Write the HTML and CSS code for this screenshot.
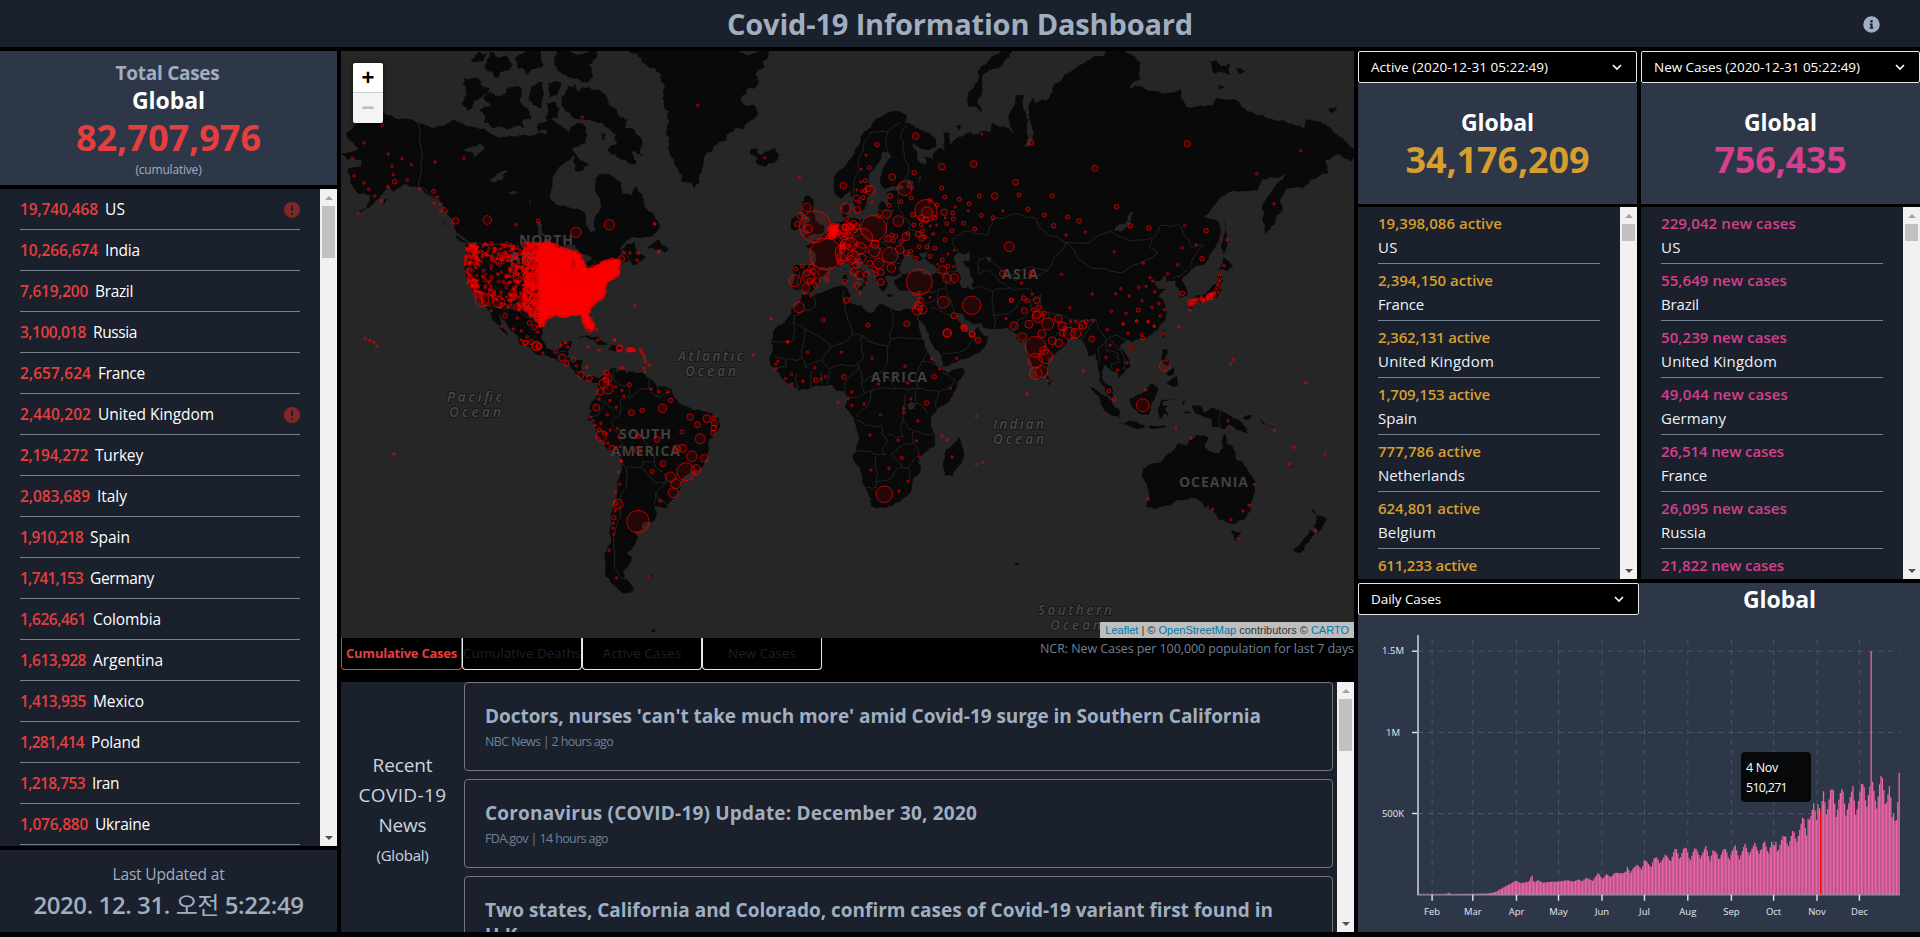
FILE: index.html
```
<!DOCTYPE html>
<html lang="en">
<head>
<meta charset="utf-8">
<title>Covid-19 Information Dashboard</title>
<link rel="stylesheet" href="styles.css">
</head>
<body>
<header class="topbar">
  <h1 class="topbar-title"><span data-w="466">Covid-19 Information Dashboard</span></h1>
  <svg class="info-icon" viewBox="0 0 512 512"><path fill="currentColor" fill-rule="evenodd" d="M256 8a248 248 0 1 0 0 496a248 248 0 1 0 0-496zM256 118a42 42 0 1 1 0 84a42 42 0 1 1 0-84zM312 372a12 12 0 0 1-12 12h-88a12 12 0 0 1-12-12v-24a12 12 0 0 1 12-12h12v-64h-12a12 12 0 0 1-12-12v-24a12 12 0 0 1 12-12h64a12 12 0 0 1 12 12v100h12a12 12 0 0 1 12 12z"/></svg>
</header>
<main class="board">
  <section class="col-left">
    <div class="total">
      <div class="total-label"><span data-w="104">Total Cases</span></div>
      <div class="total-place"><span data-w="73">Global</span></div>
      <div class="total-num"><span data-w="185">82,707,976</span></div>
      <div class="total-note"><span data-w="66">(cumulative)</span></div>
    </div>
    <div class="scroller grow">
      <ul class="case-list" id="cases"></ul>
      <div class="sbar"><i class="up"></i><b class="thumb thumb-52"></b><i class="down"></i></div>
    </div>
    <div class="updated">
      <div class="updated-label"><span data-w="112">Last Updated at</span></div>
      <div class="updated-time"><span data-w="270">2020. 12. 31. <span class="meridiem">오전</span> 5:22:49</span></div>
    </div>
  </section>

  <section class="col-mid">
    <div class="map">
      <svg class="map-svg" viewBox="0 0 1013 587">
        <g id="land" class="land"></g>
        <g id="water" class="water"></g>
        <g id="borders" class="borders"></g>
        <g class="continent">
          <text x="178" y="194" textLength="54">NORTH</text><text x="169" y="211" textLength="68">AMERICA</text>
          <text x="278" y="388" textLength="52">SOUTH</text><text x="270" y="405" textLength="69">AMERICA</text>
          <text x="530" y="331" textLength="56">AFRICA</text><text x="661" y="228" textLength="36">ASIA</text>
          <text x="838" y="436" textLength="69">OCEANIA</text>
        </g>
        <g class="ocean">
          <text x="106" y="351" textLength="55">Pacific</text><text x="108" y="366" textLength="52">Ocean</text>
          <text x="337" y="310" textLength="65">Atlantic</text><text x="344" y="325" textLength="51">Ocean</text>
          <text x="652" y="378" textLength="51">Indian</text><text x="652" y="393" textLength="51">Ocean</text>
          <text x="697" y="564" textLength="74">Southern</text><text x="709" y="579" textLength="51">Ocean</text>
        </g>
        <g id="marks" class="marks"></g>
      </svg>
      <div class="zoom-ctl"><span class="zoom-in">+</span><span class="zoom-out">−</span></div>
      <div class="attrib"><a>Leaflet</a> | © <a>OpenStreetMap</a> contributors © <a>CARTO</a></div>
    </div>
    <div class="tabs">
      <div class="tab tab-on"><span data-w="111">Cumulative Cases</span></div>
      <div class="tab"><span data-w="118">Cumulative Deaths</span></div>
      <div class="tab"><span data-w="79">Active Cases</span></div>
      <div class="tab"><span data-w="68">New Cases</span></div>
      <div class="ncr"><span data-w="314">NCR: New Cases per 100,000 population for last 7 days</span></div>
    </div>
    <div class="news">
      <div class="news-side"><span data-w="60">Recent</span><span data-w="88">COVID-19</span><span data-w="48">News</span><small class="news-scope"><span data-w="52">(Global)</span></small></div>
      <div class="news-list">
        <article class="card"><h2 class="card-title"><span data-w="776">Doctors, nurses 'can't take much more' amid Covid-19 surge in Southern California</span></h2><p class="card-src"><span data-w="128">NBC News | 2 hours ago</span></p></article>
        <article class="card"><h2 class="card-title"><span data-w="492">Coronavirus (COVID-19) Update: December 30, 2020</span></h2><p class="card-src"><span data-w="123">FDA.gov | 14 hours ago</span></p></article>
        <article class="card"><h2 class="card-title"><span data-w="788">Two states, California and Colorado, confirm cases of Covid-19 variant first found in</span><br>U.K.</h2></article>
      </div>
      <div class="sbar"><i class="up"></i><b class="thumb thumb-52"></b><i class="down"></i></div>
    </div>
  </section>

  <section class="col-right">
    <div class="pair">
      <div class="stat">
        <div class="select"><span data-w="177">Active (2020-12-31 05:22:49)</span><svg class="chev" viewBox="0 0 10 7"><path d="M1 1l4 4 4-4"/></svg></div>
        <div class="stat-head"><div class="stat-place"><span data-w="73">Global</span></div><div class="stat-num amber"><span data-w="184">34,176,209</span></div></div>
        <div class="scroller grow">
          <ul class="stat-list amber" id="active"></ul>
          <div class="sbar"><i class="up"></i><b class="thumb thumb-17"></b><i class="down"></i></div>
        </div>
      </div>
      <div class="stat">
        <div class="select"><span data-w="206">New Cases (2020-12-31 05:22:49)</span><svg class="chev" viewBox="0 0 10 7"><path d="M1 1l4 4 4-4"/></svg></div>
        <div class="stat-head"><div class="stat-place"><span data-w="73">Global</span></div><div class="stat-num pink"><span data-w="132">756,435</span></div></div>
        <div class="scroller grow">
          <ul class="stat-list pink" id="fresh"></ul>
          <div class="sbar"><i class="up"></i><b class="thumb thumb-17"></b><i class="down"></i></div>
        </div>
      </div>
    </div>
    <div class="daily">
      <div class="daily-head">
        <div class="select select-daily"><span data-w="70">Daily Cases</span><svg class="chev" viewBox="0 0 10 7"><path d="M1 1l4 4 4-4"/></svg></div>
        <div class="daily-place"><span data-w="73">Global</span></div>
      </div>
      <svg class="chart" id="chart" viewBox="0 0 562 317"></svg>
      <div class="tip"><div><span data-w="32">4 Nov</span></div><div><span data-w="41">510,271</span></div></div>
    </div>
  </section>
</main>
<script src="app.js"></script>
</body>
</html>
```
FILE: styles.css
```
* { box-sizing: border-box; margin: 0; padding: 0; }
body { background: #000; color: #fff; font-family: "Open Sans", "Noto Sans", "Noto Sans CJK KR", sans-serif; font-size: 16px; line-height: 1.5; height: 937px; overflow: hidden; display: flex; flex-direction: column; }
ul { list-style: none; }
.topbar { height: 47px; flex: none; background: #1a202c; display: flex; align-items: center; justify-content: center; position: relative; }
.topbar-title { font-size: 29px; font-weight: 700; color: #a0aec0; line-height: 42px; white-space: nowrap; }
.info-icon { position: absolute; right: 40px; top: 16px; width: 17px; height: 17px; color: #a0aec0; }
.board { display: grid; grid-template-columns: 337px 1013px 562px; column-gap: 4px; margin-top: 4px; height: 881px; }
.grow { flex: 1; min-height: 0; }

.col-left { display: flex; flex-direction: column; gap: 4px; height: 881px; min-height: 0; }
.total { height: 134px; flex: none; background: #2d3748; text-align: center; padding-top: 8px; }
.total-label { font-size: 19px; font-weight: 700; color: #a0aec0; line-height: 28px; margin-left: -2px; }
.total-place { font-size: 23px; font-weight: 700; line-height: 27px; }
.total-num { font-size: 36px; font-weight: 700; color: #e53e3e; line-height: 47px; }
.total-note { font-size: 12px; color: #a0aec0; line-height: 17px; }
.scroller { display: flex; background: #1a202c; overflow: hidden; }
.sbar { flex: none; width: 17px; background: #f1f1f1; display: flex; flex-direction: column; align-items: center; }
.sbar .up, .sbar .down { height: 17px; display: flex; align-items: center; }
.sbar .up::after { content: ""; border: 4px solid transparent; border-top: 0; border-bottom: 4px solid #a3a3a3; }
.sbar .down { margin-top: auto; }
.sbar .down::after { content: ""; border: 4px solid transparent; border-bottom: 0; border-top: 4px solid #505050; }
.thumb { width: 13px; background: #c1c1c1; }
.thumb-52 { height: 52px; }
.thumb-17 { height: 17px; }
.case-list { flex: 1; padding: 0 20px; }
.case-row { height: 41px; border-bottom: 1px solid #718096; display: flex; align-items: center; font-size: 15.5px; white-space: nowrap; padding-top: 1px; }
.case-num { color: #e53e3e; font-weight: 600; margin-right: 7px; }
.warn { margin-left: auto; width: 16px; height: 16px; color: #822727; }
.updated { height: 82px; flex: none; background: #1a202c; text-align: center; color: #a0aec0; padding-top: 12px; }
.updated-label { font-size: 15.5px; line-height: 24px; }
.updated-time { font-size: 24px; line-height: 37px; font-weight: 600; }
.meridiem { font-weight: 400; }

.col-mid { display: flex; flex-direction: column; height: 881px; }
.map { height: 587px; flex: none; background: #262626; position: relative; overflow: hidden; }
.map-svg { display: block; width: 1013px; height: 587px; }
.land { fill: #090909; }
.water { fill: #262626; }
.borders { fill: none; stroke: #252525; stroke-width: 1; }
.continent { font: 700 14px "Open Sans", sans-serif; fill: #404040; }
.ocean { font: italic 600 13.5px "Open Sans", sans-serif; fill: #484848; stroke: #161616; stroke-width: 2px; paint-order: stroke; }
.marks { fill: rgba(255, 0, 0, 0.12); stroke: #f00; stroke-opacity: 0.68; stroke-width: 1; }
.zoom-ctl { position: absolute; left: 12px; top: 12px; width: 30px; height: 60px; border-radius: 2px; overflow: hidden; box-shadow: 0 1px 5px rgba(0, 0, 0, 0.65); font: 700 22px/30px "Liberation Sans", sans-serif; text-align: center; }
.zoom-in, .zoom-out { display: block; height: 30px; background: #fff; color: #000; }
.zoom-in { border-bottom: 1px solid #ccc; }
.zoom-out { background: #f4f4f4; color: #bbb; }
.attrib { position: absolute; right: 0; bottom: 0; height: 16px; padding: 0 5px; background: rgba(255, 255, 255, 0.7); color: #333; font: 11px/16px "Liberation Sans", sans-serif; white-space: nowrap; }
.attrib a { color: #0078a8; }
.tabs { display: flex; height: 44px; flex: none; }
.tab { width: 120px; height: 32px; border: 1px solid #e2e8f0; border-top: 0; border-radius: 0 0 4px 4px; color: #1a202c; font-size: 13.5px; line-height: 31px; white-space: nowrap; display: flex; justify-content: center; }
.tab-on { width: 121px; border-color: #e53e3e; color: #e53e3e; font-weight: 700; font-size: 13px; }
.ncr { margin-left: auto; color: #718096; font-size: 12.5px; line-height: 22px; white-space: nowrap; }
.news { flex: 1; min-height: 0; background: #1a202c; display: flex; overflow: hidden; }
.news-side { width: 123px; display: flex; flex-direction: column; align-items: center; justify-content: center; color: #cbd5e0; text-align: center; font-size: 19px; line-height: 30px; padding-top: 5px; }
.news-scope { font-size: 15px; line-height: 30px; }
.news-list { flex: 1; height: 250px; overflow: hidden; display: flex; flex-direction: column; gap: 8px; padding-right: 4px; }
.card { flex: none; height: 89px; border: 1px solid #777; border-radius: 4px; padding: 21px 20px; }
.card-title { font-size: 19px; line-height: 25px; font-weight: 700; color: #a0aec0; white-space: nowrap; }
.card-src { font-size: 12.5px; line-height: 20px; margin-top: 3px; color: #718096; }

.col-right { display: flex; flex-direction: column; gap: 4px; height: 881px; }
.pair { display: grid; grid-template-columns: 279px 279px; column-gap: 4px; height: 528px; }
.stat { display: flex; flex-direction: column; height: 528px; }
.select { height: 32px; flex: none; background: #000; border: 1px solid #e2e8f0; border-radius: 2px; padding: 0 14px 0 12px; display: flex; justify-content: space-between; align-items: center; font-size: 13.5px; white-space: nowrap; }
.chev { width: 10px; height: 7px; fill: none; stroke: #fff; stroke-width: 1.6; }
.stat-head { height: 121px; flex: none; background: #2d3748; text-align: center; padding-top: 23px; margin-bottom: 3px; }
.stat-place { font-size: 23px; font-weight: 700; line-height: 32px; }
.stat-num { font-size: 36px; line-height: 44px; font-weight: 700; }
.amber { color: #d69e2e; }
.pink { color: #d53f8c; }
.stat-list { flex: 1; padding: 0 20px; }
.stat-row { height: 57px; border-bottom: 1px solid #718096; padding-top: 4px; font-size: 15px; line-height: 24px; font-weight: 600; white-space: nowrap; }
.stat-name { color: #edf2f7; font-weight: 400; }
.daily { flex: 1; background: #2d3748; position: relative; }
.daily-head { display: grid; grid-template-columns: 281px 281px; height: 32px; }
.daily-place { text-align: center; font-size: 23px; font-weight: 700; line-height: 33px; }
.chart { display: block; width: 562px; height: 317px; }
.axis { stroke: #a0aec0; stroke-width: 2; fill: none; }
.axis-x { stroke-opacity: 0.5; }
.tick { stroke: #e2e8f0; stroke-width: 1.4; }
.grid { stroke: #4a5568; stroke-width: 1; stroke-dasharray: 5 5; }
.axis-text { fill: #e2e8f0; font-size: 9.5px; text-anchor: middle; }
.bars { fill: #ed64a6; }
.bar-hit { fill: #f00; }
.tip { position: absolute; left: 383px; top: 169px; width: 70px; height: 50px; border-radius: 4px; background: rgba(0, 0, 0, 0.85); padding: 6px 5px; font-size: 12.5px; line-height: 20px; }
```
FILE: app.js
```
const byId = id => document.getElementById(id);

const warn = '<svg class="warn" viewBox="0 0 16 16"><circle cx="8" cy="8" r="8" fill="currentColor"/><path d="M8 3.5v5.5M8 11v2" stroke="#1a202c" stroke-width="2"/></svg>';
const cases = [['19,740,468','US',78,20,1],['10,266,674','India',78,35],['7,619,200','Brazil',68,38],['3,100,018','Russia',66,44],['2,657,624','France',71,47],['2,440,202','United Kingdom',71,116,1],['2,194,272','Turkey',68,48],['2,083,689','Italy',70,30],['1,910,218','Spain',63,40],['1,741,153','Germany',63,64],['1,626,461','Colombia',66,68],['1,613,928','Argentina',66,70],['1,413,935','Mexico',66,51],['1,281,414','Poland',64,49],['1,218,753','Iran',65,27],['1,076,880','Ukraine',68,55]];
byId('cases').innerHTML = cases.map(c => `<li class="case-row"><span class="case-num" data-w="${c[2]}">${c[0]}</span><span data-w="${c[3]}">${c[1]}</span>${c[4] ? warn : ''}</li>`).join('');
const statRows = (rows, unit) => rows.map(r => `<li class="stat-row"><span data-w="${r[2]}">${r[0]} ${unit}</span>${r[1] ? `<br><span class="stat-name" data-w="${r[3]}">${r[1]}</span>` : ''}</li>`).join('');
byId('active').innerHTML = statRows([['19,398,086','US',124,20],['2,394,150','France',115,46],['2,362,131','United Kingdom',112,116],['1,709,153','Spain',112,39],['777,786','Netherlands',103,87],['624,801','Belgium',102,58],['611,233','',99]], 'active');
byId('fresh').innerHTML = statRows([['229,042','US',135,20],['55,649','Brazil',126,38],['50,239','United Kingdom',126,116],['49,044','Germany',127,65],['26,514','France',123,46],['26,095','Russia',126,45],['21,822','',123]], 'new cases');

document.querySelectorAll('[data-w]').forEach(el => {
  const gap = (el.dataset.w - el.getBoundingClientRect().width) / el.textContent.length;
  el.style.letterSpacing = gap.toFixed(3) + 'px';
});

// Small repeatable generator, so the coastline detail is the same on each load.
let seed = 7;
const rnd = () => (seed = (seed * 16807) % 2147483647) / 2147483647;

// Web Mercator at zoom 2, shifted to the map viewport.
const geo = ([lon, lat]) => [478.3 + lon * 2.8444, 351.9 - 162.97 * Math.log(Math.tan(Math.PI / 4 + lat * Math.PI / 360))];
const arctic = ([x, y]) => [x / 3, y / 3 - 3];
const north = ([x, y]) => [299 + x / 2.1778, y / 3 - 51];
const south = ([x, y]) => [299 + x / 2.1778, y / 3 + 269];
const europe = ([x, y]) => [439 + x / 3, 69 + y / 3];
const west = ([x, y]) => [x / 2.45 - 341, y / 3 - 51];
const southwest = ([x, y]) => [x / 2.45 - 341, y / 3 + 409];

const parse = s => s.trim().split(/\s+/).map(p => p.split(',').map(Number));
const roughen = (pts, closed, k) => {
  for (let n = 0; n < 3; n++) {
    const out = [];
    pts.forEach((p, i) => {
      out.push(p);
      if (!closed && i === pts.length - 1) return;
      const q = pts[(i + 1) % pts.length], dx = q[0] - p[0], dy = q[1] - p[1];
      if (Math.hypot(dx, dy) < 2) return;
      const t = (rnd() - 0.5) * k;
      out.push([(p[0] + q[0]) / 2 - dy * t, (p[1] + q[1]) / 2 + dx * t]);
    });
    pts = out;
  }
  return pts;
};
const toPath = (pts, closed) => 'M' + pts.map(p => p[0].toFixed(1) + ' ' + p[1].toFixed(1)).join('L') + (closed ? 'Z' : '');
const draw = (id, list, proj, closed, k) => {
  byId(id).innerHTML += list.map(s => `<path d="${toPath(roughen(parse(s).map(proj), closed, k), closed)}"/>`).join('');
};

draw('land', [
  '-9,37 -9.5,38.7 -8.8,41 -9.2,43 -8,43.7 -4,43.5 -1.8,43.4 -1.2,44.7 -1.2,46 -2.5,47.3 -4.5,48 -4.7,48.5 -2,48.7 -1.6,48.7 -1.9,49.7 -1.2,49.4 0.2,49.6 1.6,50.8 3.5,51.4 4.6,52.5 5,53.3 7,53.5 8.5,53.7 8.8,54.2 8.1,55.5 8.1,56.8 9.5,57.2 10.6,57.7 10.3,56.6 10.9,56.4 10,55.2 9.7,54.8 11,54.3 12.5,54.4 14.2,53.9 16.5,54.5 18.6,54.7 19.5,54.4 20,54.9 21,55.3 21,57 21.7,57.6 22.6,57.7 23.2,57 24.4,57.2 24.4,58.3 23.5,58.8 24,59.4 26,59.6 28,59.6 30,59.9 28.5,60.6 26,60.4 23,59.9 21.3,60.8 21.4,62 22,63 24,64.5 25.4,65 24.2,65.8 22.2,65.8 21.3,64.5 20,63.7 17.8,62.5 17.2,61 18.8,60 18,58.8 16.7,58 16.4,56.8 15.8,56.1 14.3,55.6 12.9,55.5 12.5,56.3 11.3,58.5 10.7,59.5 9.5,59 7.5,58 5.7,58.7 5.1,60 5.2,61.8 6.5,62.8 9,63.6 11,64.8 12.8,66.3 14.5,67.7 17,68.8 19,69.8 22,70.4 25,71 28,71 31,70.3 30,69.7 33,69.4 37,68.6 41,67.5 41,66.5 38,66.1 34,66.7 32.5,67 34.5,65.8 34.8,64.5 37,63.9 37.8,64.3 37,65.1 40,64.6 40,65.5 42.2,66.4 44.2,66 44,67.2 43.5,68.5 46,68.3 46,66.9 48,67.6 53,68.6 54,68.2 57,68.6 60,68.5 61,69.7 65,69.2 68.5,68.3 67,69.5 67,71 69,72.8 72,72.8 72.5,71 73,69 73.5,67.8 72,66.5 74,66.7 75,68 74,70 73.5,71.3 75,72.5 76,71.9 78,72.3 80,72.2 82,73.6 87,74.9 90,75.4 95,76.1 100,76.4 104,77.7 108,76.7 113,75.8 113,74.4 109,73.5 113,73.7 118,73.2 123,73 127,73.5 129,71.5 133,71.6 138,71.6 140,72.5 146,72.4 152,71 160,70 165,69.6 170,69 171,70.1 176,69.8 180,69 185,67.2 188,66.3 190,66.2 187,64.4 182,65.5 178,64.6 179,62.5 175,61.8 172,60.8 170,60 166,60 164,59.8 162,58 163,56.2 161,55 160,53 157,51 155.6,54 155.7,57 159,59.5 163,61.5 164,62.5 160,61.8 156,61.6 154,59.5 150,59.5 144,59.3 140,57.7 135,54.6 139,54 141,52.5 140,49 137,45.5 135,43.5 132,43.1 130.6,42.3 128,40.5 127.5,39.5 129.3,37 129.2,35.2 126.5,34.4 126.5,37 125,38 125,39.6 122,39 121.5,40.8 118,39 119,37.3 122.3,37.2 120.3,36 119.3,34.8 121.8,31.7 121.8,29 120,26.5 118,24.4 116,22.9 113,22 110.5,21.2 110,20.3 109.5,21.5 108,21.6 106,20 105.8,18.8 108.5,15.8 109.2,12.5 107,10.5 105,8.7 105,10.2 103,11 101,12.7 100,13.4 99.3,11 99.3,9.3 100.4,7 102,6.3 103.4,4.2 103.5,1.5 101.4,2.8 100.4,5.5 98.4,8 98.7,10.5 98,14 97,17 94.5,16 94.2,18.5 92,21.5 90.5,22.5 87,21.3 86.5,20 82.3,16.7 80.2,15.5 80.2,13 79.8,10.3 78.2,8.9 77.5,8.1 76.3,10 74.8,13 73.5,16 72.8,19 72.7,21.3 70.5,20.8 69,22.3 70,22.9 67,24.7 66.5,25.4 61.6,25.2 57.5,25.6 56.8,27 54.5,26.6 51.5,27.9 50,30 48,30 48.5,28.4 50.2,26.5 50.8,24.8 51.3,26 51.6,24.1 54,24.2 56.2,26.2 56.8,24.2 59.7,22.5 57.8,19 55,17.2 52,15.6 48,14 45,12.8 43.4,12.7 42.8,15 42.7,16.6 39.2,21 38.5,23.7 35,28 34.8,29.5 34.3,28 32.6,29.9 32.3,31.3 34.3,31.3 35.5,33.9 36,36.7 34,36.3 32,36.2 30.5,36.7 28,36.8 26.5,38.3 26.3,39.4 29,40.5 29,41.2 31.5,41.3 35,42 38,41 41.5,41.5 41.5,42.5 38,44.5 37,45.3 39.2,47.2 35,46.3 36.5,45.3 33.5,44.5 32.7,45.4 33.5,46.1 31,46.6 29.6,45.2 28.6,43.5 27.8,42.5 28.8,41.2 26.5,40.5 23.8,40.8 22.8,40.4 24,38 23,36.5 21.5,37 20,39.5 19.4,41.8 17,43.1 14.5,45.3 12.3,45.3 12.5,44 14,42.5 16,41.8 18.4,40.1 17,40.5 16.6,39.7 17,39 15.7,37.9 15.8,39.8 12,41.9 10.2,43.9 8.8,44.4 6.5,43.1 3.2,43.2 3.2,41.9 0,39.8 0,38.7 -2,36.8 -5.5,36.1 -6.5,37',
  '-5.9,35.8 -2,35.1 3,36.9 10,37.3 11,35.5 10.2,34.2 11,33.2 15,32.3 16,31.2 19,30.3 20,31.8 22,32.9 25,31.6 29,30.9 31,31.5 32.4,31.2 32.6,29.9 35.5,24 37,21 37.3,19 39.5,15.2 43.2,12.3 43.3,11.5 45,10.5 51.2,11.9 51,10.3 48,4.5 42,-1.6 39.5,-4.5 39.2,-8 40.7,-11 40.6,-15 35,-19.8 35.4,-24 32.8,-26 32.5,-28.5 28,-33 25.7,-34 20,-34.8 18.3,-34.1 18.2,-32 15,-26.7 14.4,-22.5 11.8,-18 13.7,-11 12.2,-6 9,-1.5 9.7,2.5 9,4.2 6,4.3 4.5,6.3 1.5,6.1 -3,5 -7.5,4.4 -11,6.8 -13.3,8.8 -15,11 -17,13 -17.4,14.8 -16.3,19 -17,21 -14.5,26.2 -11.5,28.2 -9.8,30 -9.8,31.5 -6.5,34',
  '49.3,-12 50.4,-15.7 47,-25 44,-25 43.4,-22 44.4,-16.3 48,-13.6',
  '-77.4,8.6 -75.6,9.5 -74.8,11.1 -71.5,12.4 -71.5,10.9 -68.5,11.3 -68,10.5 -64,10.4 -62,10.7 -60,8.5 -57,6 -52,4.8 -50,1 -48,-0.8 -44.5,-2.5 -40,-2.9 -37,-4.8 -35.2,-5.3 -34.8,-8 -37,-11 -39,-13.5 -39.2,-17.8 -41,-22 -44.5,-23.2 -48.5,-26 -48.7,-28.4 -52,-32.5 -54,-34.6 -58,-34.2 -57,-36.5 -58,-38.3 -62,-38.8 -62.2,-40.7 -65,-41 -63.7,-42.5 -65.3,-45 -67.5,-46.3 -65.8,-47.8 -69,-51 -68.5,-52.5 -65.2,-54.7 -68.5,-55.5 -72,-54 -75,-52 -75.5,-48 -75.5,-46.7 -73,-44 -73.8,-41.5 -73.4,-37 -71.5,-33 -71.4,-30 -70.2,-25 -70.3,-18.4 -76,-14 -79,-8 -81.3,-5.8 -81.2,-4.2 -80,-3 -81,-2 -80,0.5 -78.8,1.5 -77.3,4 -77.8,7.2',
  '-168,65.6 -162,66.3 -166.5,68.3 -163,69.5 -156.7,71.3 -150,70.5 -141,69.6 -136,69 -129,70 -125,69.5 -118,69 -115,68.2 -109,68 -102,68 -96,68.2 -95,71.5 -92,69.5 -88,68.5 -85,69.7 -82,69.2 -82,67 -87,66.3 -86,65.5 -90,64 -94,61 -94.7,58.7 -92.5,57 -88,56.5 -82.3,55.2 -82.2,53 -80.5,51.3 -79,51.5 -79,54.5 -76.6,56.5 -78.3,59 -77.5,62.4 -73.7,62.4 -69.7,61 -69,59 -66,58.8 -64.5,60.3 -61.5,57 -58,54.8 -55.8,52.5 -60,50.2 -66,50.2 -70,47.2 -65,49.2 -64.7,46.5 -61,45.5 -65.7,43.5 -66,45 -70,43.7 -70.5,41.7 -74,40.5 -76,37 -75.6,35.3 -81,31.5 -80,26.8 -80.5,25.2 -82.6,28 -84,30 -89.5,30.2 -90,29.2 -94,29.6 -97.3,27.5 -97.8,22.5 -96,19 -94,18.2 -91.5,18.5 -90.4,21 -87,21.4 -88.3,18 -88.6,15.8 -83.3,15 -83.7,11 -81.5,9 -79.5,9.5 -77.4,8.6 -77.8,7.2 -80,7.3 -83,8.3 -85.8,10.2 -87.5,13 -92,14.5 -95,16 -99,16.7 -105.5,20.3 -105.8,22.5 -109.3,25.6 -112.5,29.6 -114.8,31.8 -112,28 -109.6,23.2 -110,23 -112.2,25.5 -115,28 -117.1,32.5 -120.5,34.5 -122.5,37.5 -124.3,40.4 -124.2,44 -124.7,48.3 -122.5,48.5 -123.3,49.3 -127.5,51 -130.3,54.8 -133.5,58 -139.5,59.7 -146,60.8 -150,59.3 -151.7,61 -154,58.8 -158,56.5 -164.5,54.6 -160,56 -157.5,58.7 -162,59 -165,61 -166,63 -161,63.7 -161,64.6 -166,64.5',
  '-5.5,50 1.4,51.2 1.7,52.7 0,53 -1.5,55 -2,57.5 -3.2,58.6 -5,58.6 -6,56.5 -5,55 -3,54 -4.5,53.2 -5,51.8 -3,51.4', '-10,52 -6.3,52.2 -6,54.5 -7.5,55.2 -9.8,54',
  '131,34 135,34.6 136,33.6 137,34.6 140,35 141,36 141,38.5 142,39.5 141,41.4 140,40.8 139.5,38.5 137,36.8 135.8,35.6 132.5,35.4', '130,33.5 131.8,33.5 131.2,31.3 130.2,31.3', '140,42 141,42.5 143.3,42 145.5,43.3 142,45.4 141.5,43.3', '132.5,33.5 134.5,34.3 134.2,33.3 133,32.9', '142,46 143.5,49 143,53 142.5,54.3 142,50',
  '121,22 122,25 120.2,23.5', '108.7,19 110.5,20 110,18.5', '120.5,18.5 122.2,18.4 121.5,15 124,13 120.6,14', '122,7 125.5,9.7 126.3,7 125.4,5.7', '122,10.5 123,11.5 125,12.4 124.5,10 123,9.3',
  '95.3,5.6 98,4 103.5,-1 106,-3 105.8,-5.8 102,-4 98.7,1.5', '105.3,-6.8 108,-6.8 111,-6.5 114.5,-7.8 114.3,-8.6 108,-7.7', '109,1.5 111.3,2.5 113,3.2 116.8,7 119,5.2 117.8,1 116,-3.8 112,-3.4 110,-1.5', '119,-3 119.8,0.5 125,1.5 120.5,0.3 121,-1 123.3,-1 121.5,-2 123,-4.5 121,-3 120.4,-5.5 119.5,-5.3', '115.5,-8.3 119,-8.3 123,-8.4 119,-9', '123.5,-10.3 127,-8.4 125,-9.4', '127.5,0 128.5,1.5 128,-1', '128,-3.2 131,-3.2 129,-3.8',
  '131,-0.8 134,-0.9 135,-3.3 138,-1.7 141,-2.6 146,-5.5 147.5,-6 150.5,-10.5 147,-9.5 144,-7.6 142.5,-9.2 138,-8.3 138,-5.5 133,-4', '148.5,-5.7 152,-4.2 151,-6', '154.7,-5.5 156,-6.7 161,-9.5 156,-7.5', '164,-20.2 167,-22.2 166,-22', '177.4,-17.8 178.6,-17.9 178,-18.3',
  '113.7,-22.5 114,-26 115.8,-32 115,-34.3 118,-35 123.5,-34 126,-32.3 131,-31.5 134.5,-33 135.8,-34.8 137.8,-32.6 137,-35.2 138.5,-35.5 140,-37.8 143.5,-38.8 146.3,-39 150,-37.5 151.3,-33.5 153.2,-30 153.5,-27 150.8,-23.5 149,-20.5 146.3,-19 145.3,-15 143.5,-14.3 142.5,-10.7 141.5,-13.5 140.8,-17.4 139,-17.3 135.5,-15 136.8,-12.3 132.5,-11.2 130,-13 129.5,-15 126,-14 122.2,-17.8 121,-19.5 117,-20.7',
  '144.7,-40.8 148.3,-41 147,-43.6 146,-43.5', '172.8,-34.5 175,-36.8 178.5,-37.7 177,-39.5 175,-41.6 173.8,-39.4 174.8,-38', '172.7,-40.6 174.2,-41.5 171,-44.5 170.5,-46 168.5,-46.6 166.6,-46 171,-42.5',
  '80,9.7 81.8,7.5 80.5,6', '-84.8,22 -82,23.1 -74.3,20.2 -77.7,19.9 -79,21.5', '-74.3,18.4 -73,19.8 -68.5,18.6 -71.5,17.8', '12.5,38 15.6,38.2 15,36.8', '8.3,40.8 9.7,41 9.5,39.1 8.5,39', '8.7,42.5 9.4,43 9.3,41.4', '23.6,35.5 26.2,35.2 24,35', '32.4,35 34.5,35.6 33.5,34.7', '-61,-51.5 -58,-51.5 -59.5,-52.3', '68.6,-49 70.4,-49.2 69.5,-49.7', '48.5,69.4 50,69.2 49,68.7', '178.7,71.2 182,71.2 180,70.8', '-59.3,-62.3 -57,-62 -58,-62.5', '-153,58 -152,58 -153.5,57', '-132.5,54 -131.5,53.5 -131.2,52.3', '-128,50.7 -123.5,48.5 -126,49.2'
], geo, true, 0.3);
draw('land', [
  '370,92 412,92 445,118 430,140 395,172 380,188 362,165 375,125', '425,150 450,130 480,145 520,115 540,120 540,165 565,190 570,215 545,215 550,240 500,245 460,240 430,225 440,205 415,185 450,175',
  '390,40 410,12 440,15 425,40', '445,10 500,20 515,50 470,90 430,60', '520,30 555,5 600,10 605,55 560,80 530,60', '650,4 765,4 740,50 755,85 690,90 650,70 640,30', '572,115 605,105 602,180 570,160', '622,105 660,105 650,140 622,150', '615,165 640,160 650,210 620,220',
  '680,112 705,110 712,160 722,120 745,115 785,135 800,160 820,180 860,215 850,240 905,290 905,325 870,310 885,350 840,335 800,305 828,290 800,240 760,220 700,212 668,180', '700,310 712,330 745,350 700,365', '780,255 795,262 785,278', '590,230 620,222 625,255 590,250',
  '840,0 900,30 940,60 960,100 965,150 985,190 975,250 995,330 1020,400 1060,422 1075,380 1095,315 1150,280 1160,258 1210,240 1248,205 1245,180 1200,150 1215,125 1250,110 1240,80 1270,60 1265,40 1280,0', '1228,305 1245,300 1250,318 1275,310 1300,298 1317,320 1300,345 1270,357 1245,345 1250,330 1230,320', '918,600 950,570 960,585 983,605 975,612 940,605', '862,640 905,622 880,648'
], arctic, true, 0.5);
draw('land', ['810,150 790,190 760,210 745,260 735,300 745,340 715,320 712,300 728,260 735,215 765,170 795,150', '1240,185 1255,180 1265,200 1285,190 1285,225 1250,222', '1298,205 1320,215 1305,222', '1258,255 1275,262 1262,268', '1500,325 1518,325 1508,337', '688,378 700,374 696,390'], north, true, 0.4);
draw('water', [
  '47,45 49,46.5 53,46.8 53,45 51,44.5 50.3,44.3 53,42 54,40 54,37 50,37.4 49,39 50,40.5 48,42.5', '58.5,45 61,46.5 60,44', '104,51.6 108,53.5 110,55.6 108.5,53 105.5,51.6', '32,0.3 34,0 33.5,-2.4 31.8,-2.3', '31,60 33,60.8 31,61.6', '34.8,61 36,62.5 35.3,60.9',
  '-92,46.7 -89,48.5 -86,48.7 -84.6,46.6 -88,46.7', '-84,46 -80,45.2 -82,43.1', '-87.6,42 -86.2,42 -85.5,45.6 -87,45.5', '-83,41.7 -79,42.8 -81,42', '-79.5,43.3 -76.5,44 -77,43.4', '-98,50.5 -96.5,50.5 -98,53.5 -99,53.5', '-116,61.2 -109.5,62.8 -112,61.4', '-125,66 -118,66.6 -121,65.1', '-110,59.2 -106,59.3 -109,59', '-102.5,58 -101.5,57'
], geo, true, 0.5);
draw('borders', [
  '-141,69.6 -141,60.3 -137,59 -133,57 -130,55.5', '-123,49 -95,49 -90,48', '-83,46 -82,43 -76,44.5 -71,45 -69,47.3 -67,45', '-117,32.5 -111,31.3 -106.5,31.7 -103,29 -99.5,27.5 -97.2,26', '-92,14.6 -91,17.8 -89,17.8', '-89.3,14.4 -83.3,15', '-85.7,11.1 -83.7,11',
  '-78.8,1.5 -75,0 -70,-4 -70,1 -67,2 -67.3,6 -72,7.5 -72,11.5', '-67,1.5 -64,4 -60,5 -60,8', '-60,5 -56,2 -52,4.5', '-57,6 -57,2', '-54,5 -54,2.3', '-81,-4.3 -78,-4.5 -75,0', '-70,-4 -73,-7 -70.5,-11 -65,-10 -60,-15 -58,-20 -57.5,-22 -54.3,-24 -54,-26 -57.5,-30 -53.5,-33.7', '-70.5,-11 -69,-15 -70,-18 -68,-22.5 -63,-22 -58,-27 -54.5,-27', '-62.5,-22 -62,-20 -58,-20', '-68,-22.5 -70,-33 -71.5,-40 -72,-50 -68.5,-52.5', '-57.5,-30 -58.3,-34',
  '-9,27.5 -9,21.5 -13,21 -17,21', '-9,27.5 -5,25 4,19 12,23.5 9.5,30 8.2,35 8.5,37', '-2,35 -1.5,32 -9,29 -9,27.5', '-5,25 -6,15.5 -12,15', '-12,15 -16,16.3', '-12,15 -11.5,12.3 -15,12.3', '-6,15.5 -5,12 -2,14 1,15 4,19', '12,23.5 15,23 24,19.5 25,22 25,31.6', '25,22 36,22', '15,23 15.5,16 13.5,13.5 3.6,11.7 1,15', '24,19.5 24,15 22,11 15,7.5 13.5,13.5', '3.6,11.7 2.7,6.4', '1,11 1.2,6.1', '-2.8,11 -3,5', '-8,10 -7.5,4.5', '14,12.8 9,6 9,4.5', '15,7.5 16,3.5 10,2', '22,11 27,5 18.5,4.5 16,3.5', '27,5 35,5 34,10 36.5,15 38,18', '35,5 42,4 45,5 48,8 43,11', '36.5,14.5 42,12.5', '42,4 41,-1.6', '34,4.5 34,0 38,-3.5', '30.5,3 29.5,-1 29.5,-6 31,-8.5 34,-10 40.5,-11', '29.5,-1 34,-1', '18.5,4.5 17,-1 13,-5', '12.5,-6 17,-8 22,-8 22,-11 24,-13 22,-16 23.5,-18 12,-17.3', '29.5,-6 28.5,-9 29.5,-12 27,-12 24,-11', '33,-10 33,-14 25,-17.7', '25,-17.7 29,-22 25,-25.7 20,-26.5 20,-18.3', '20,-26.5 20,-28.5 16.5,-28.5', '33,-14 35,-17 33,-20 31.3,-22.4 29,-22', '31.3,-22.4 32,-26',
  '31,69.5 28.5,68 30,65 31.5,62.8 28,60.5', '24,66 24,68.5 18,68.5 14,65 12,61 11.5,59', '24,68.5 28.5,69.8', '28,59.5 27.5,57.5 28,56 32,53 31.5,52 39,49.8 38.5,47.2', '21,56 26.5,56 24,54 23.5,51.5 24,50 22.5,49 28,45.5', '14.2,53.9 15,51 19,49.5 22.5,49', '7,53.3 6,50 8,48.9 7.5,47.5 7,44', '15,51 12.3,50.3 13.7,48.7 9.7,47.5', '16,46.5 22.5,47.8', '22,48 20.5,44.5 28.5,43.9', '16,46 20,45', '-1.7,43.3 3.2,42.4', '-7,41.8 -7.3,37.2',
  '41.5,41.5 46,41.8 48.5,42', '42.5,41 44.5,39.8 44.5,37.2 42.5,37.2 36,36', '44.5,37.2 45.5,35 48,30', '42,37 41,34.4 39,33.3 36.5,32.5 35,29.5', '39,32 42,31.2 46.5,29', '43,17 46,17.3 52,19 55,22.7 52,24', '48,38.5 44.5,39', '54,37.3 57,38 61,36.5 61,31.5 61.7,25.2', '61,36.5 66.5,37.4 71,37 74.8,37', '61,29.5 66,29.8 69.5,32 71.5,36', '68,24 70,28 74.5,31.5 74,34 78,35.5',
  '49,46.5 47,48.5 47,50 51,51.5 55,51 59,50.7 61,54 69,55.3 76,54.3 80,50.8 87,49 85,47 82.5,45.3 80,42 73.5,40 69,39.5 66.7,41 62,43.5 58.5,45.5 56,45 56,41.3 60,42 66.7,37.4', '80,42 75,43 71,42.3 66.7,41', '87,49 98,50.5 102,51.5 113,49.5 117,50 120,52.8 126,53 131,47.8 135,48.3 131,44.8 130.6,42.5', '87,49 91,45 96,42.7 105,41.6 112,43.8 119,46.5 116,48 117,50', '124.2,40 129.5,42.3', '78,35.5 79,31 82,30 88,28 92,27.8 97,28.2 98,25 101,21.5 105,23 108,21.6', '80.5,30 80.5,28.7 88,26.5', '88.8,26.4 88.5,22', '92.3,24 92,21.5', '97,28 94,24 92.5,21.5', '101,21.5 98,19 98.5,14', '101,21.5 101,18 104.7,17.5 105.5,14.5 102.5,13.5 103,11.5', '102,22 104.7,19.5 107.5,15.5 107,11.5', '141,-2.6 141,-9'
], geo, false, 0.25);

const dots = [];
const place = (proj, s) => s.trim().split(/\s+/).forEach(t => { const [x, y, r = 1.2] = t.split(',').map(Number); dots.push([...proj([x, y]), r]); });
place(arctic, '124,233 70,285 34,330 142,318 183,332 211,350 153,355 157,380 161,401,2.3 199,395 140,416 39,383 69,405 83,424 101,444 121,459 52,496 236,423 278,430,2 289,447 279,466 299,468 307,481 299,489 316,491 344,519,3.3 439,516,4.3 525,530 591,519,2 705,553,5.2 805,530,5.2 941,527 953,611 848,614,1.5 867,615 893,616 889,637 881,773 282,342 368,331 724,208 1070,172 1271,329 1375,388 842,632,3 450,788 481,835 492,803,2.5 529,810 517,843 541,849 566,825,2.5 580,838,2.5 590,852 72,872 86,877 98,883 107,895 559,866 768,844 770,876 821,875 540,876 552,884,2.5 570,882,2.5 586,893,4.5 594,895,3 673,884 661,892 680,897 836,900,3 1291,813 1340,881 423,755,7 438,755,6 474,762,5.5 453,733,3.5 528,777,3.5 746,839,4.5 730,815,3 395,603,4');
place(west, '1287,1028,2.5 1315,1039,4.5 1330,1060 1386,1028 1361,1055,2 1378,1073,3.5 1388,1090,2.5 1405,1078,2.5 1413,1098 1438,1101 1423,1125,3.3 1444,1135,3 1440,1041 1468,1051 1506,1020 1517,1046,3 1538,1050,2 1542,1050,2 1546,1050,2 1550,1050,2 1554,1051,1.5 1541,1049,1.6 1548,1049,1.6 1520,1103 1527,1103 1486,1118,2.5 1490,1135,4 1480,1150,5 1490,1167,5 1471,1175,3.5 1485,1140,3 1542,1154,2 1508,1160 1524,1172 1494,1202 1468,1196 1528,1188 1510,1221 1461,1223,3.5 1488,1244 1547,1238,3 1447,1252 1452,1262 1458,1275 1472,1270 1473,1308,5.3 1468,1290,2 1481,1300,2 1513,1286 1495,1290 1480,1330 1490,1330 1500,1345,3 1517,1312 1520,1340 1522,1383 965,1362 1563,1308,2.5 1563,1351,3.5');
place(southwest, '1522,3 1515,37 1518,73 1509,97 1514,132,5 1508,128,2 1504,173,2.3 1507,152 1502,190 1502,205 1503,223 1492,271 1511,354 1563,185,11.3');
place(south, '20,768 0,88 4,96 8,105 10,115 12,126 20,135 8,145 10,157 24,207 42,215 61,215 67,241,2.3 5,271,2.3 49,265,4.3 109,291,3.3 125,314,3 91,336,2 146,296,4 161,295,2 162,310,3 161,324,3 159,338,2.5 131,356,5 37,358,3 80,386,4 93,385,4 113,409,5.3 140,415,4 100,455,9 122,449,5 50,431,3 27,455,2 67,471,5 78,491,5 72,518,5 44,542,1.5 246,105 321,66 365,97 439,97 506,115 577,139 636,117 653,147 690,115 669,39,4.3 706,24,3 723,43,3 736,61,3 300,124 295,133 296,147 317,176 330,163 331,193 355,184 383,181,2.3 380,143 394,176 404,170 444,171,2.3 519,192 583,189 641,170,2.3 676,205 624,249,2.3 590,237 575,265 575,277 605,303 461,216 453,236 461,256 431,247 488,251 524,284 501,345 562,361 602,363 658,349 669,359 680,411 733,289 733,433 746,427 570,414,1.7 609,411 503,450 542,445 584,484 564,514 532,523,8.3 815,18,4 833,50,4 847,13,4 888,12,6 919,18,4 935,40,6 949,40,5 964,16,4 920,40,3 875,41,4 898,62,4 912,69,4 861,80,10.3 883,110,7 880,92,4.3 861,122,7.3 862,160,6.3 875,155,6 890,182,1.3 843,222 965,152 984,57,3 1018,29 1024,76 1015,112 1060,128 1040,150 1021,213,2 1033,238,2 1063,40 1092,44 1095,54,2 1070,82,1.5 1120,18 1106,5 1082,3 1052,12 1139,41 1174,20 1143,138,5.3 1101,210 1095,256,6.5 1286,133 1292,118 1450,188 1281,302 1168,325 1200,355 1382,331 1424,382 1415,432 1492,403 1338,493 1326,556 1313,573 1287,599 1301,656 1247,567 1107,537 1472,632');
place(north, '1192,431,3.2 991,505,3.2 1439,452 1343,521 1381,611 1038,620,2.3 898,587,2 881,645,2 931,651,2 956,663,2.3 901,677,2.3 928,705 970,697 1068,677,2.3 1108,684,2.3 1186,677 1233,692,2.3 1211,734 1278,719 1224,776,2.3 1272,797 1181,743 1171,794 1033,755 1096,789 918,823 831,849 985,882 1036,882 1047,866 1065,888 1086,862 1102,859 1117,843 1111,833 1149,821 1121,875 1093,902 1130,910 1115,922 1085,930,2 1142,929 1058,940 1027,934 1081,963 1106,965 1133,948 1052,971 1120,979 1181,880,2.3 936,923 986,962 854,882 836,895,2.3 843,902,2 864,901,3.3 809,901,2 837,932,3 868,922,2.3 857,930,2 880,939,2 867,950,6 864,945,4 797,956 911,957,4 938,965 949,965 972,965,2 925,985,2 960,980,2 1198,930 32,672 40,755 1262,825 1264,838 1261,845 1258,855 1264,862 1254,866');
place(europe, '407,48,3.3 291,74,2.2 605,42,1 752,67,3 258,105,1 268,143,2 244,148,1 485,140,3.3 581,132,3.3 337,171,3.3 403,158,2.3 190,197,3.3 255,182,2 242,186,1 272,211,5 245,213,1.5 255,212,2 264,206,3 230,210,1 374,205,7.2 394,202,2 485,204,2 494,231,2 229,234,3.3 249,233,2 239,247,1.5 330,228,2.5 394,234,2 363,245,2 567,251,2 538,238,2 598,228,2 644,228,3.3 707,187,3 717,225,2 744,268,2 604,286,2 639,293,2 668,273,1 565,272,1 526,261,1 198,265,5.3 232,269,3.3 275,247,1 327,256,2 320,282,4.3 297,289,2 355,303,5.3 438,272,11.2 441,277,5.5 450,241,2 470,255,2 399,284,2.5 424,294,3 437,299,3 463,293,2.5 493,277,3.3 518,279,2 520,297,2 500,311,2 551,310,2 584,327,2 516,332,2 496,294,1 451,318,1 470,315,1 402,315,2 424,314,2 428,332,2 495,360,2 460,342,1.5 434,350,2 425,355,3 415,343,3 383,340,2 378,350,4 364,365,2 347,349,2 335,345,2 324,357,3.3 340,362,2 281,325,13 106,320,16 80,262,4.3 61,288,3.3 52,312,3 85,326,4.3 78,295,1 137,402,16 200,297,2 202,318,4 230,320,3.3 248,355,10 213,372,6.3 240,385,6 283,392,6 285,372,4 192,397,9 197,372,5 190,345,5 183,415,5 180,425,3 213,420,4.3 220,410,6 243,415,5 228,435,3.3 222,455,4 238,466,4.3 260,463,3 269,430,3 296,430,5.3 283,447,2.5 302,457,3.3 288,463,2 334,444,4.3 330,406,8 359,388,4.3 379,400,3 392,394,2 408,415,2 417,380,2 440,381,2 465,385,2 450,409,2 487,420,2 503,403,1 523,391,1 473,433,1 520,440,1 503,438,2 487,450,4.3 501,474,4.3 523,474,4.3 418,486,13 403,527,1 450,532,1 303,486,3.3 230,496,3 194,484,2 240,520,1 258,488,1 130,458,5.3 85,470,6.3 45,482,6 77,503,4 90,484,3 112,482,3 107,499,2 67,438,2 47,447,2 95,440,3 80,458,3.3 100,455,3 142,480,2 72,520,1 92,527,1 57,562,5.3 199,541,3 130,600,2 264,616,2 380,611,3 422,541,3 415,558,4 412,570,5 428,569,4.3 490,547,6 522,587,3 575,556,9.2 553,625,3 548,620,2 502,639,4 577,643,3 694,541,2 668,461,3.3 756,461,3.3 688,380,5');
for (let i = 0; i < 44; i++) { const t = rnd(); dots.push([...europe([150 + t * 22 + (rnd() - 0.5) * 20, 346 - t * 24 + (rnd() - 0.5) * 24]), 1.2 + rnd() * 1.6]); }
for (let i = 0; i < 14; i++) dots.push([...europe([180 + rnd() * 65, 310 + rnd() * 130]), 1.5 + rnd() * 2.2]);
for (let i = 0; i < 36; i++) { const t = rnd(); dots.push([...north([1193 + t * 68, 909 - t * 28 + (rnd() - 0.5) * 16]), 1 + rnd() * 0.6]); }

const usa = parse('374,587 628,585 665,603 715,615 728,650 740,668 790,640 820,633 836,640 833,680 792,705 790,742 745,780 742,805 760,830 752,848 735,835 722,800 700,797 670,805 640,800 612,815 606,836 595,838 578,815 565,800 550,795 530,783 490,783 440,772 405,752 385,715 372,670');
const inside = (x, y, p) => { let c = false; for (let i = 0, j = p.length - 1; i < p.length; j = i++) if ((p[i][1] > y) !== (p[j][1] > y) && x < (p[j][0] - p[i][0]) * (y - p[i][1]) / (p[j][1] - p[i][1]) + p[i][0]) c = !c; return c; };
for (let y = 586; y < 850; y += 4.6) for (let x = 372; x < 840; x += 4.6) {
  const px = x + (rnd() - 0.5) * 3.4, py = y + (rnd() - 0.5) * 3.4;
  const keep = px > 590 ? 1.5 : px > 545 ? 0.66 : px < 412 ? (py < 650 || (py > 690 && py < 730) ? 0.55 : 0.15) : py < 640 ? 0.27 : px > 505 ? 0.3 : 0.11;
  if (!inside(px, py, usa) || (px > 693 && px < 702 && py > 625 && py < 668)) continue;
  if (rnd() < keep) dots.push([...arctic([px, py]), px > 600 ? 1.2 + rnd() * 1.2 : 0.8 + rnd() * 0.8]);
}
byId('marks').innerHTML = dots.map(d => `<circle cx="${d[0].toFixed(1)}" cy="${d[1].toFixed(1)}" r="${d[2].toFixed(1)}"/>`).join('');

// Daily cases chart: turning points as x, bar height; days between are interpolated.
const early = '60,0.3 89,0.4 91,2.6 93,0.4 130,1.2 137,2.5 146,7.5 152,10.7 158,14 163,11.5 171,13 174,19.8 176,12 180,14.5 185,12 193,13 200,13 210,14.5 215,13 221,15.4';
const late = '0,540 5,545 20,533 38,543 55,518 68,538 80,521 92,532 105,518 128,520 138,515 143,498 150,520 160,505 172,494 186,510 193,480 200,484 213,503 222,475 232,472 240,492 257,462 272,485 284,447 290,447 299,480 312,442 320,445 330,485 343,445 350,447 361,475 378,437 390,483 399,450 410,457 417,483 430,447 438,447 448,483 455,457 460,447 465,432 478,480 495,430 507,465 525,428 537,462 543,447 549,447 551,413 560,445 566,463 575,425 582,440 588,425 593,460 608,408 618,410 624,445 640,386 650,430 670,343 680,410 685,350 690,362 702,307 710,362 714,312 722,335 731,272 740,350 752,268 760,268 769,355 779,285 788,260 798,347 812,285 819,258 828,350 845,248 852,255 860,330 868,262 878,245 884,285 890,330 902,226 908,235 917,325 930,248 936,355 940,335 947,373 952,345 957,218';
const curve = parse(early).concat(parse(late).map(([x, y]) => [222 + x / 3, (584 - y) / 3]));
const height = x => { let i = 1; while (i < curve.length - 1 && curve[i][0] < x) i++; const [a, b] = [curve[i - 1], curve[i]]; return Math.max(0.4, a[1] + (b[1] - a[1]) * Math.min(1, Math.max(0, (x - a[0]) / (b[0] - a[0])))); };
const base = 279.7;
let svg = '';
const months = [['Feb',74.1],['Mar',114.8],['Apr',158.5],['May',200.5],['Jun',244],['Jul',286.5],['Aug',329.8],['Sep',373.4],['Oct',415.6],['Nov',459],['Dec',501.4]];
months.forEach(m => { svg += `<line class="grid" x1="${m[1]}" x2="${m[1]}" y1="${base}" y2="25"/>`; });
[['1.5M',36.2],['1M',117.5],['500K',198.5]].forEach(t => { svg += `<line class="grid" x1="60" x2="542" y1="${t[1]}" y2="${t[1]}"/><line class="tick" x1="54" x2="60" y1="${t[1]}" y2="${t[1]}"/><text class="axis-text" x="35" y="${t[1] + 3}">${t[0]}</text>`; });
svg += '<g class="bars">';
for (let i = 0; i < 344; i++) {
  const x = 60 + i * 1.401, h = i === 323 ? 243.5 : height(x + 0.7), hit = i === 287;
  svg += `<rect ${hit ? 'class="bar-hit" ' : ''}x="${x.toFixed(2)}" y="${(base - h).toFixed(1)}" width="1.3" height="${h.toFixed(1)}"/>`;
}
svg += `</g><path class="axis" d="M60 20V${base + 0.3}"/><path class="axis axis-x" d="M59 ${base}H542"/>`;
months.forEach(m => { svg += `<line class="tick" x1="${m[1]}" x2="${m[1]}" y1="${base}" y2="${base + 6}"/><text class="axis-text" x="${m[1]}" y="300">${m[0]}</text>`; });
byId('chart').innerHTML = svg;
```
